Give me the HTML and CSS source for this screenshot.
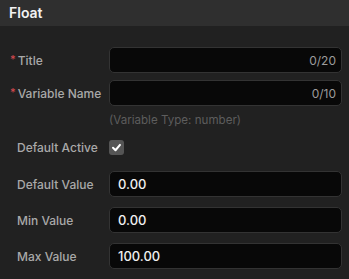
FILE: index.html
```html
<!DOCTYPE html>
<html>
<head>
    <title>Float</title>
    <link rel="stylesheet" href="styles.css">
</head>
<body>
    <div class="panel-header">Float</div>

    <div class="form">
        <div class="row row-title">
            <label class="required">Title</label>
            <div class="input">
                <span class="value"></span>
                <span class="count">0/20</span>
            </div>
        </div>
        <div class="row">
            <label class="required">Variable Name</label>
            <div class="input">
                <span class="value"></span>
                <span class="count">0/10</span>
            </div>
        </div>
        <div class="hint">(Variable Type: number)</div>

        <div class="row row-check">
            <label>Default Active</label>
            <div><span class="checkbox">
                <svg width="11" height="11" viewBox="0 0 12 12"><path d="M2.2 6.3 L4.9 9 L9.8 3.2" fill="none" stroke="#fff" stroke-width="2.2" stroke-linecap="round" stroke-linejoin="round"/></svg>
            </span></div>
        </div>

        <div class="row row-num">
            <label>Default Value</label>
            <div class="input"><span class="value">0.00</span></div>
        </div>
        <div class="row row-num">
            <label>Min Value</label>
            <div class="input"><span class="value">0.00</span></div>
        </div>
        <div class="row row-num">
            <label>Max Value</label>
            <div class="input"><span class="value">100.00</span></div>
        </div>
    </div>
</body>
</html>
```

FILE: styles.css
```css
body { margin: 0; background: #212121; font-family: Inter, "Noto Sans", sans-serif; color: #eee; }
.panel-header { height: 26px; line-height: 25px; background: #2f2f2f; padding-left: 9px;
               font-size: 14px; font-weight: 600; color: #f2f2f2; }
.form { padding: 21px 7px 0 10px; }
.row { display: grid; grid-template-columns: 99px 1fr; align-items: center; height: 26px; }
.row label { font-size: 12px; font-weight: 500; color: #a9a9a9; padding-left: 7px; }
.row label.required { padding-left: 0; }
.row label.required::before { content: '*'; color: #d4494f; font-size: 11px; margin-right: 2px;
                              position: relative; top: -2px; }
.row-title { margin-bottom: 7px; }
.input { display: flex; justify-content: space-between; align-items: center; height: 26px;
         box-sizing: border-box; background: #080808; border: 1px solid #333; border-radius: 5px;
         padding: 0 5px 0 8px; }
.value { font-size: 13px; font-weight: 500; color: #f0f0f0; }
.count { font-size: 12px; color: #9c9c9c; }
.hint { margin: 7px 0 0 99px; font-size: 11.6px; line-height: 14px; color: #5d5d5d; }
.row-check { height: 15px; margin-top: 13px; }
.checkbox { display: flex; align-items: center; justify-content: center; width: 15px; height: 15px;
            background: #555; border-radius: 3px; }
.row-num { margin-top: 10px; }
.row-check + .row-num { margin-top: 16px; }
```
